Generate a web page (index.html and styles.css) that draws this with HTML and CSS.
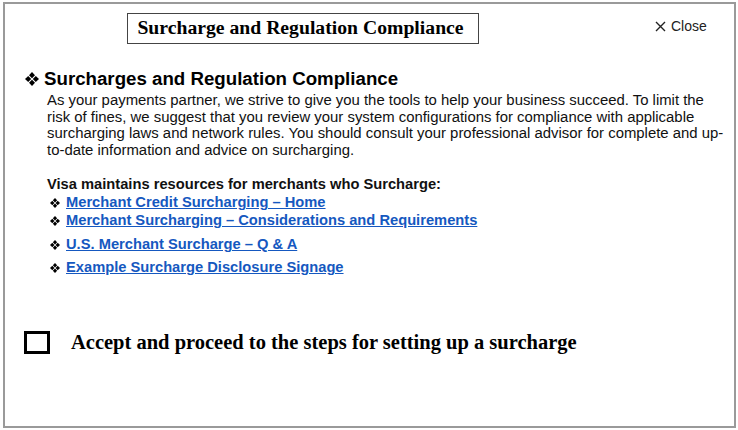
FILE: index.html
```html
<!DOCTYPE html>
<html>
<head>
<meta charset="utf-8">
<link rel="stylesheet" href="styles.css">
</head>
<body>
<div class="dialog">
  <div class="topbar">
    <h1 class="title">Surcharge and Regulation Compliance</h1>
    <div class="close"><svg class="x" width="11" height="11" viewBox="0 0 11 11"><path d="M1 1 L10 10 M10 1 L1 10" stroke="#222" stroke-width="1.4" fill="none"/></svg> Close</div>
  </div>
  <h2 class="heading"><svg class="dia" width="14" height="14" viewBox="0 0 14 14"><path d="M7 0 L10 3.2 L7 6.2 L4 3.2Z M7 7.8 L10 10.8 L7 14 L4 10.8Z M0 7 L3.2 4 L6.2 7 L3.2 10Z M7.8 7 L10.8 4 L14 7 L10.8 10Z" fill="#000"/></svg> Surcharges and Regulation Compliance</h2>
  <p class="intro">As your payments partner, we strive to give you the tools to help your business succeed. To limit the risk of fines, we suggest that you review your system configurations for compliance with applicable surcharging laws and network rules. You should consult your professional advisor for complete and up-to-date information and advice on surcharging.</p>
  <div class="resources">
    <div class="res-title">Visa maintains resources for merchants who Surcharge:</div>
    <ul class="links">
      <li class="l1"><svg class="b" width="10" height="10" viewBox="0 0 14 14"><path d="M7 0 L10 3.2 L7 6.2 L4 3.2Z M7 7.8 L10 10.8 L7 14 L4 10.8Z M0 7 L3.2 4 L6.2 7 L3.2 10Z M7.8 7 L10.8 4 L14 7 L10.8 10Z" fill="#000"/></svg><a href="#">Merchant Credit Surcharging – Home</a></li>
      <li class="l2"><svg class="b" width="10" height="10" viewBox="0 0 14 14"><path d="M7 0 L10 3.2 L7 6.2 L4 3.2Z M7 7.8 L10 10.8 L7 14 L4 10.8Z M0 7 L3.2 4 L6.2 7 L3.2 10Z M7.8 7 L10.8 4 L14 7 L10.8 10Z" fill="#000"/></svg><a href="#">Merchant Surcharging – Considerations and Requirements</a></li>
      <li class="l3"><svg class="b" width="10" height="10" viewBox="0 0 14 14"><path d="M7 0 L10 3.2 L7 6.2 L4 3.2Z M7 7.8 L10 10.8 L7 14 L4 10.8Z M0 7 L3.2 4 L6.2 7 L3.2 10Z M7.8 7 L10.8 4 L14 7 L10.8 10Z" fill="#000"/></svg><a href="#">U.S. Merchant Surcharge – Q &amp; A</a></li>
      <li class="l4"><svg class="b" width="10" height="10" viewBox="0 0 14 14"><path d="M7 0 L10 3.2 L7 6.2 L4 3.2Z M7 7.8 L10 10.8 L7 14 L4 10.8Z M0 7 L3.2 4 L6.2 7 L3.2 10Z M7.8 7 L10.8 4 L14 7 L10.8 10Z" fill="#000"/></svg><a href="#">Example Surcharge Disclosure Signage</a></li>
    </ul>
  </div>
  <label class="accept"><span class="box"></span><span class="accept-text">Accept and proceed to the steps for setting up a surcharge</span></label>
</div>
</body>
</html>
```
FILE: styles.css
```css
html, body { margin: 0; padding: 0; background: #fff; }
body { width: 738px; height: 430px; overflow: hidden; }
.dialog {
  box-sizing: border-box;
  margin: 2px 0 0 3px;
  width: 733px;
  height: 426px;
  border: 2px solid #9a9a9a;
  font-family: "Liberation Sans", Arial, sans-serif;
  color: #111;
}
.topbar {
  display: flex;
  align-items: flex-start;
  padding: 9px 0 0 122px;
}
.title {
  margin: 0;
  box-sizing: border-box;
  width: 352px;
  height: 31px;
  border: 1px solid #444;
  font-family: "Liberation Serif", "Times New Roman", serif;
  font-weight: bold;
  font-size: 19.7px;
  line-height: 27px;
  text-align: center;
  color: #000;
  padding-right: 5px;
}
.close {
  display: flex;
  align-items: center;
  gap: 5px;
  margin: 5px 0 0 176px;
  font-size: 14px;
  color: #222;
}
.heading {
  display: flex;
  align-items: center;
  gap: 5px;
  margin: 25px 0 0 20px;
  font-size: 18.7px;
  font-weight: bold;
  line-height: 20px;
  color: #000;
}
.intro {
  margin: 3px 0 0 42px;
  width: 680px;
  font-size: 14.9px;
  line-height: 16.6px;
  color: #111;
}
.resources { margin: 18px 0 0 42px; }
.res-title { font-weight: bold; font-size: 14.7px; line-height: 17px; }
.links { list-style: none; margin: 0; padding: 0; }
.links li { display: flex; align-items: center; font-size: 14.7px; line-height: 17px; font-weight: bold; }
.links .b { margin: 0 6px 0 3px; }
.links a { color: #1558c0; text-decoration: underline; }
.links .l1 { margin-top: 1px; }
.links .l2 { margin-top: 1px; }
.links .l3 { margin-top: 7px; }
.links .l4 { margin-top: 6px; }
.accept {
  display: flex;
  align-items: center;
  margin: 55px 0 0 19px;
}
.box {
  box-sizing: border-box;
  width: 26px;
  height: 23px;
  border: 3px solid #000;
}
.accept-text {
  margin-left: 21px;
  font-family: "Liberation Serif", "Times New Roman", serif;
  font-weight: bold;
  font-size: 20.5px;
  color: #000;
}
```
